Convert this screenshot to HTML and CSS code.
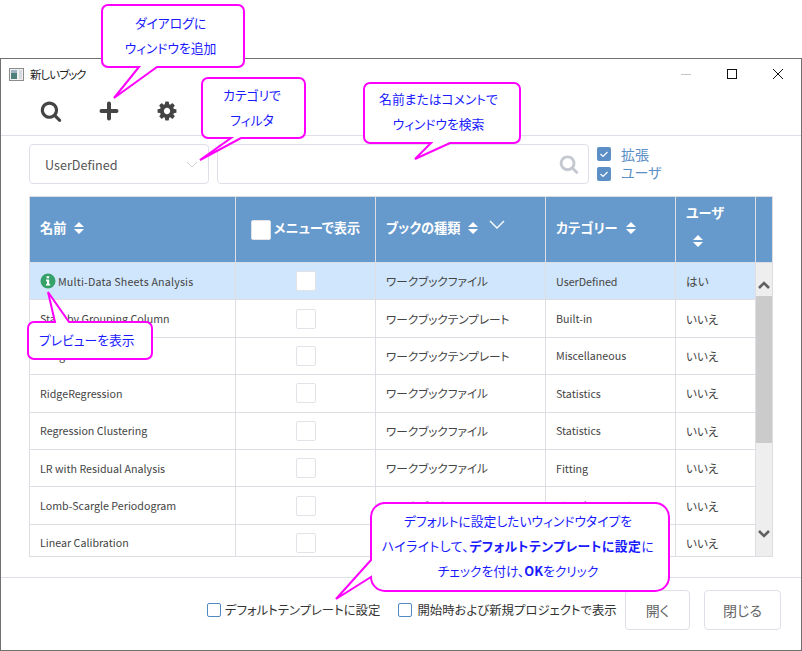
FILE: index.html
```html
<!DOCTYPE html>
<html lang="ja">
<head>
    <meta charset="UTF-8">
    <meta name="viewport" content="width=device-width, initial-scale=1.0">
    <title>新しいブック</title>
    <link rel="stylesheet" href="styles.css">
</head>
<body>
    <svg class="defs" width="0" height="0">
        <symbol id="i-search" viewBox="0 0 1792 1792"><path d="M1216 832q0-185-131.5-316.5t-316.5-131.5-316.5 131.5-131.5 316.5 131.5 316.5 316.5 131.5 316.5-131.5 131.5-316.5zm512 832q0 52-38 90t-90 38q-54 0-90-38l-343-342q-179 124-399 124-143 0-273.5-55.5t-225-150-150-225-55.5-273.5 55.5-273.5 150-225 225-150 273.5-55.5 273.5 55.5 225 150 150 225 55.5 273.5q0 220-124 399l343 343q37 37 37 90z"/></symbol>
        <symbol id="i-cog" viewBox="0 0 1792 1792"><path d="M1152 896q0-106-75-181t-181-75-181 75-75 181 75 181 181 75 181-75 75-181zm512-109v222q0 12-8 23t-20 13l-185 28q-19 54-39 91 35 50 107 138 10 12 10 25t-9 23q-27 37-99 108t-94 71q-12 0-26-9l-138-108q-44 23-91 38-16 136-29 186-7 28-36 28h-222q-14 0-24.5-8.5t-11.5-21.5l-28-184q-49-16-90-37l-141 107q-10 9-25 9-14 0-25-11-126-114-165-168-7-10-7-23 0-12 8-23 15-21 51-66.5t54-70.5q-27-50-41-99l-183-27q-13-2-21-12.5t-8-23.5v-222q0-12 8-23t19-13l186-28q14-46 39-92-40-57-107-138-10-12-10-24 0-10 9-23 26-36 98.5-107.5t94.5-71.5q13 0 26 10l138 107q44-23 91-38 16-136 29-186 7-28 36-28h222q14 0 24.5 8.5t11.5 21.5l28 184q49 16 90 37l142-107q9-9 24-9 13 0 25 10 129 119 165 170 7 8 7 22 0 12-8 23-15 21-51 66.5t-54 70.5q26 50 41 98l183 28q13 2 21 12.5t8 23.5z"/></symbol>
        <symbol id="i-sort" viewBox="0 0 10 12"><path d="M5 0 10 5H0zM0 7h10l-5 5z"/></symbol>
        <symbol id="i-check" viewBox="0 0 14 14"><path d="M3.5 7 6 9.5 10.5 5" fill="none" stroke="#fff" stroke-width="1.2"/></symbol>
    </svg>

    <div class="window">
        <div class="titlebar">
            <svg class="app-icon" width="15" height="13" viewBox="0 0 15 13">
                <rect x="0.5" y="0.5" width="14" height="12" fill="#f1f1f1" stroke="#8c8c8c"/>
                <rect x="2" y="2" width="6" height="9" fill="#4f7f7a"/>
                <rect x="2" y="2" width="6" height="3" fill="#9fb4c4"/>
                <rect x="10" y="2" width="3" height="9" fill="#d5dbe0"/>
            </svg>
            <span class="title">新しいブック</span>
            <div class="winbtns">
                <svg width="12" height="12" viewBox="0 0 12 12"><path d="M1 6.5h10" stroke="#c4c4c4"/></svg>
                <svg width="12" height="12" viewBox="0 0 12 12"><rect x="1.5" y="1.5" width="9" height="9" fill="none" stroke="#111"/></svg>
                <svg width="12" height="12" viewBox="0 0 12 12"><path d="M1 1l10 10M11 1 1 11" stroke="#111"/></svg>
            </div>
        </div>

        <div class="toolbar">
            <svg class="tool" width="22" height="22"><use href="#i-search"/></svg>
            <svg class="tool" width="22" height="22" viewBox="0 0 22 22"><path d="M11 3.5v15M3.5 11h15" stroke="#444" stroke-width="4" stroke-linecap="round"/></svg>
            <svg class="tool" width="22" height="22"><use href="#i-cog"/></svg>
        </div>

        <div class="filters">
            <div class="select">
                <span>UserDefined</span>
                <svg width="12" height="7" viewBox="0 0 12 7"><path d="M1 1l5 5 5-5" fill="none" stroke="#cfd3dc"/></svg>
            </div>
            <div class="searchbox">
                <svg width="20" height="20"><use href="#i-search"/></svg>
            </div>
            <div class="scopes">
                <label class="scope"><span class="tick"><svg width="14" height="14"><use href="#i-check"/></svg></span><span>拡張</span></label>
                <label class="scope scope-user"><span class="tick"><svg width="14" height="14"><use href="#i-check"/></svg></span><span>ユーザ</span></label>
            </div>
        </div>

        <div class="list">
            <div class="list-head">
                <div class="cell"><span class="hcell">名前<svg class="sort" width="10" height="12"><use href="#i-sort"/></svg></span></div>
                <div class="cell center"><span class="box head-box"></span><span class="hcell">メニューで表示</span></div>
                <div class="cell"><span class="hcell">ブックの種類<svg class="sort" width="10" height="12"><use href="#i-sort"/></svg></span>
                    <svg class="head-chevron" width="16" height="9" viewBox="0 0 16 9"><path d="M1 1l7 7 7-7" fill="none" stroke="#fff" stroke-width="1.4"/></svg>
                </div>
                <div class="cell"><span class="hcell">カテゴリー<svg class="sort" width="10" height="12"><use href="#i-sort"/></svg></span></div>
                <div class="cell stacked"><span class="hcell">ユーザ</span><svg class="sort" width="10" height="12"><use href="#i-sort"/></svg></div>
                <div class="cell"></div>
            </div>
            <div class="list-body">
                <div class="rows">
                    <div class="row selected">
                        <div class="cell name">
                            <svg class="info" width="16" height="16" viewBox="0 0 16 16"><circle cx="8" cy="8" r="7.5" fill="#36a269"/><path d="M6.6 3.2h2.6v2H6.6zM6 6.6h3.2v4.4h1v1.6H6V11h1V8.2H6z" fill="#fff"/></svg>
                            <span class="multi">Multi-Data Sheets Analysis</span>
                        </div>
                        <div class="cell center"><span class="box"></span></div>
                        <div class="cell">ワークブックファイル</div>
                        <div class="cell latin">UserDefined</div>
                        <div class="cell">はい</div>
                    </div>
                    <div class="row">
                        <div class="cell name">Stats by Grouping Column</div>
                        <div class="cell center"><span class="box"></span></div>
                        <div class="cell">ワークブックテンプレート</div>
                        <div class="cell latin">Built-in</div>
                        <div class="cell">いいえ</div>
                    </div>
                    <div class="row">
                        <div class="cell name">Image Source</div>
                        <div class="cell center"><span class="box"></span></div>
                        <div class="cell">ワークブックテンプレート</div>
                        <div class="cell latin">Miscellaneous</div>
                        <div class="cell">いいえ</div>
                    </div>
                    <div class="row">
                        <div class="cell name">RidgeRegression</div>
                        <div class="cell center"><span class="box"></span></div>
                        <div class="cell">ワークブックファイル</div>
                        <div class="cell latin">Statistics</div>
                        <div class="cell">いいえ</div>
                    </div>
                    <div class="row">
                        <div class="cell name">Regression Clustering</div>
                        <div class="cell center"><span class="box"></span></div>
                        <div class="cell">ワークブックファイル</div>
                        <div class="cell latin">Statistics</div>
                        <div class="cell">いいえ</div>
                    </div>
                    <div class="row">
                        <div class="cell name">LR with Residual Analysis</div>
                        <div class="cell center"><span class="box"></span></div>
                        <div class="cell">ワークブックファイル</div>
                        <div class="cell latin">Fitting</div>
                        <div class="cell">いいえ</div>
                    </div>
                    <div class="row">
                        <div class="cell name">Lomb-Scargle Periodogram</div>
                        <div class="cell center"><span class="box"></span></div>
                        <div class="cell">ワークブックファイル</div>
                        <div class="cell latin">Signal Processing</div>
                        <div class="cell">いいえ</div>
                    </div>
                    <div class="row">
                        <div class="cell name">Linear Calibration</div>
                        <div class="cell center"><span class="box"></span></div>
                        <div class="cell"></div>
                        <div class="cell latin"></div>
                        <div class="cell">いいえ</div>
                    </div>
                </div>
                <div class="scrollbar">
                    <svg width="14" height="9" viewBox="0 0 14 9"><path d="M2 7l5-5 5 5" fill="none" stroke="#606060" stroke-width="2.6"/></svg>
                    <div class="thumb"></div>
                    <svg width="14" height="9" viewBox="0 0 14 9"><path d="M2 2l5 5 5-5" fill="none" stroke="#606060" stroke-width="2.6"/></svg>
                </div>
            </div>
        </div>

        <div class="footer">
            <label class="option"><span class="optbox"></span>デフォルトテンプレートに設定</label>
            <label class="option option-last"><span class="optbox"></span>開始時および新規プロジェクトで表示</label>
            <button class="btn open-btn" type="button">開く</button>
            <button class="btn close-btn" type="button">閉じる</button>
        </div>
    </div>

    <!-- 吹き出し -->
    <div class="callout c-add">
        <svg width="150" height="100" viewBox="0 0 150 100"><path d="M7 1H137a6 6 0 0 1 6 6V57a6 6 0 0 1-6 6H56L13 94 38 63H7a6 6 0 0 1-6-6V7a6 6 0 0 1 6-6z"/></svg>
        <p>ダイアログに<br>ウィンドウを追加</p>
    </div>
    <div class="callout c-filter">
        <svg width="112" height="90" viewBox="0 0 112 90"><path d="M9 1H100a6 6 0 0 1 6 6V55a6 6 0 0 1-6 6H42L1 83 32 61H9a6 6 0 0 1-6-6V7a6 6 0 0 1 6-6z"/></svg>
        <p>カテゴリで<br>フィルタ</p>
    </div>
    <div class="callout c-search">
        <svg width="160" height="82" viewBox="0 0 160 82"><path d="M7 1H151a6 6 0 0 1 6 6V55a6 6 0 0 1-6 6H87L52 77 68 61H7a6 6 0 0 1-6-6V7a6 6 0 0 1 6-6z"/></svg>
        <p>名前またはコメントで<br>ウィンドウを検索</p>
    </div>
    <div class="callout c-preview">
        <svg width="130" height="72" viewBox="0 0 130 72"><path d="M7 31H28L21 1 42 31H119a6 6 0 0 1 6 6V62a6 6 0 0 1-6 6H7a6 6 0 0 1-6-6V37a6 6 0 0 1 6-6z"/></svg>
        <p>プレビューを表示</p>
    </div>
    <div class="callout c-default">
        <svg width="340" height="102" viewBox="0 0 340 102"><path d="M50 1H320a14 14 0 0 1 14 14V75a14 14 0 0 1-14 14H50a14 14 0 0 1-14-14V75L1 97 36 58V15A14 14 0 0 1 50 1z"/></svg>
        <p>デフォルトに設定したいウィンドウタイプを<br><span class="wide">ハイライトして、<b>デフォルトテンプレートに設定</b>に</span><br>チェックを付け、<b>OK</b>をクリック</p>
    </div>
</body>
</html>
```

FILE: styles.css
```css
* {
    box-sizing: border-box;
}

body {
    position: relative;
    margin: 0;
    width: 802px;
    height: 651px;
    overflow: hidden;
    background: #fff;
    font-family: "Noto Sans CJK JP", "Noto Sans", sans-serif;
    font-feature-settings: "palt";
    color: #444;
}

.defs {
    position: absolute;
}

.window {
    display: flex;
    flex-direction: column;
    margin-top: 58px;
    height: 593px;
    border: 1px solid #707070;
    background: #fff;
}

.titlebar {
    display: flex;
    align-items: center;
    height: 30px;
    padding-left: 8px;
}

.title {
    margin-left: 6px;
    font-size: 11.5px;
    letter-spacing: -1px;
    color: #222;
}

.winbtns {
    display: flex;
    gap: 34px;
    margin-left: auto;
    margin-right: 17px;
}

.toolbar {
    display: flex;
    align-items: center;
    gap: 36px;
    height: 47px;
    padding: 0 0 2px 39px;
    border-bottom: 1px solid #dfdfe8;
}

.tool {
    fill: #444;
}

.filters {
    display: flex;
    gap: 8px;
    padding: 8px 0 0 28px;
}

.select,
.searchbox {
    display: flex;
    align-items: center;
    justify-content: space-between;
    height: 40px;
    border: 1px solid #dfdfe8;
    border-radius: 4px;
}

.select {
    width: 180px;
    padding: 0 10px 0 15px;
    font-size: 12.6px;
    color: #555;
}

.searchbox {
    justify-content: flex-end;
    width: 372px;
    padding-right: 9px;
    fill: #c4c8d0;
}

.scopes {
    display: flex;
    flex-direction: column;
    height: 40px;
    padding-top: 3px;
}

.scope {
    display: flex;
    flex: none;
    align-items: flex-start;
    gap: 10px;
    height: 20px;
    font-size: 14px;
    line-height: 14px;
    color: #5b8fc6;
}

.scope-user span:last-child {
    margin-top: -2px;
}

.tick {
    display: block;
    width: 14px;
    height: 14px;
    border-radius: 2px;
    background: #5b8fc6;
}

.tick svg {
    display: block;
}

.list {
    width: 744px;
    margin: 12px 0 0 28px;
    border: 1px solid #dddde3;
}

.list-head {
    display: grid;
    grid-template-columns: 206px 140px 170px 130px 80px 16px;
    height: 66px;
    background: #6699cc;
    color: #fff;
    border-bottom: 1px solid #dddde3;
}

.list-head .cell {
    position: relative;
    border-right: 1px solid #dddde3;
}

.list-head .cell:last-child {
    border-right: 0;
}

.hcell {
    display: flex;
    align-items: center;
    gap: 8px;
    margin-top: -4px;
    font-size: 13.2px;
    font-weight: 700;
}

.sort {
    display: block;
    fill: #fff;
}

.head-chevron {
    position: absolute;
    left: 113px;
    top: 23px;
}

.list-body {
    display: flex;
    height: 293px;
    overflow: hidden;
}

.rows {
    width: 726px;
    flex: none;
}

.row {
    display: grid;
    grid-template-columns: 206px 140px 170px 130px 80px;
    height: 37.4px;
    border-bottom: 1px solid #dddde3;
    font-size: 11.6px;
}

.row .cell {
    border-right: 1px solid #dddde3;
}

.selected {
    background: #d0e6fc;
}

.cell {
    display: flex;
    align-items: center;
    padding: 0 10px;
    white-space: nowrap;
    overflow: hidden;
}

.center {
    justify-content: center;
    gap: 3px;
    padding: 0;
}

.stacked {
    flex-direction: column;
    align-items: flex-start;
    gap: 13px;
    padding-top: 6px;
}

.stacked .hcell {
    margin-top: 0;
}

.stacked .sort {
    margin-left: 7px;
}

.name {
    gap: 2px;
}

.name,
.latin {
    font-size: 10.7px;
}

.multi {
    letter-spacing: 0.18px;
}

.info {
    flex: none;
}

.box {
    display: block;
    width: 20px;
    height: 20px;
    border: 1px solid #e2e2e8;
    border-radius: 2px;
    background: #fff;
}

.head-box {
    flex: none;
}

.scrollbar {
    display: flex;
    flex: none;
    flex-direction: column;
    align-items: center;
    width: 16px;
    padding-top: 18px;
    background: #eeeeee;
}

.thumb {
    flex: none;
    width: 16px;
    height: 147px;
    margin: 6px 0 86px;
    background: #cbcbcb;
}

.footer {
    display: flex;
    align-items: center;
    margin-top: 20px;
    padding: 12px 20px 20px 206px;
    border-top: 1px solid #dfdfe8;
}

.option {
    display: flex;
    align-items: center;
    gap: 4px;
    margin-right: 18px;
    font-size: 12.4px;
    white-space: nowrap;
    color: #333;
}

.option-last {
    gap: 5px;
    margin-right: 0;
}

.optbox {
    display: block;
    flex: none;
    width: 14px;
    height: 14px;
    border: 1px solid #4f8ac4;
    border-radius: 2px;
}

.btn {
    flex: none;
    height: 40px;
    border: 1px solid #dfdfe8;
    border-radius: 4px;
    background: #fff;
    font: inherit;
    font-size: 14px;
    color: #666;
}

.open-btn {
    width: 65px;
    margin-left: auto;
}

.close-btn {
    width: 77px;
    margin-left: 14px;
}

/* 吹き出し */
.callout {
    position: absolute;
}

.callout svg {
    display: block;
    fill: #fff;
    stroke: #ff00ff;
    stroke-width: 2;
}

.callout p {
    position: absolute;
    margin: 0;
    font-size: 12.8px;
    line-height: 25px;
    text-align: center;
    color: #1a1aff;
    white-space: nowrap;
}

.wide {
    letter-spacing: 0.5px;
}

.c-add {
    left: 101px;
    top: 4px;
}

.c-add p {
    left: -2px;
    top: 6px;
    width: 143px;
}

.c-filter {
    left: 199px;
    top: 77px;
}

.c-filter p {
    left: 2px;
    top: 5px;
    width: 102px;
}

.c-search {
    left: 363px;
    top: 82px;
}

.c-search p {
    left: -3px;
    top: 4px;
    width: 157px;
}

.c-preview {
    left: 27px;
    top: 291px;
}

.c-preview p {
    left: 12px;
    top: 36px;
}

.c-default {
    left: 335px;
    top: 502px;
}

.c-default p {
    left: 34px;
    top: 6px;
    width: 298px;
}
```
